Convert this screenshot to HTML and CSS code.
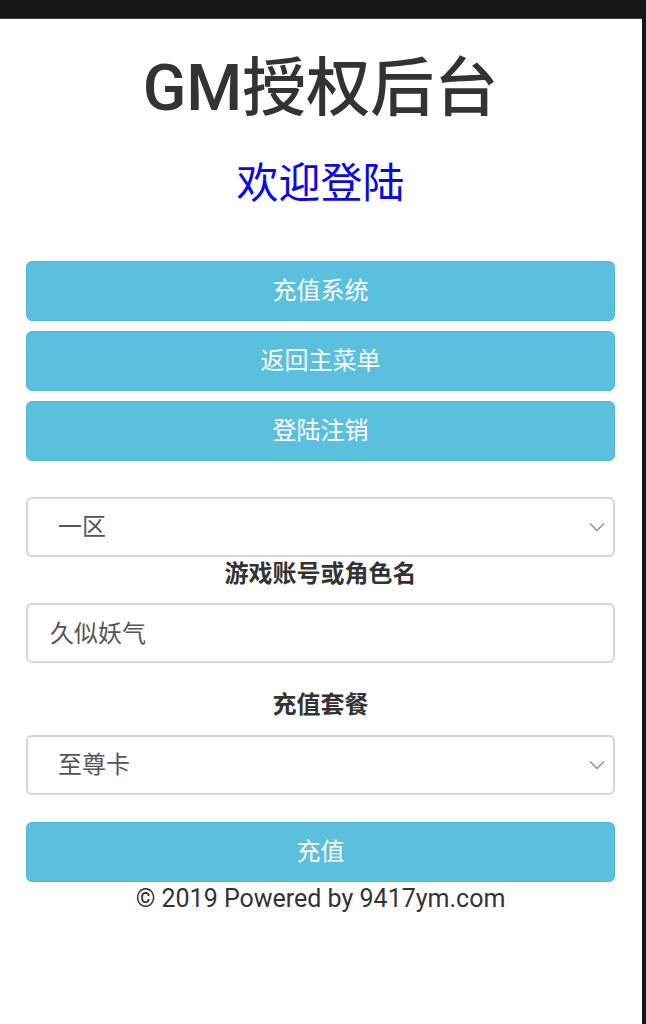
FILE: index.html
```html
<!DOCTYPE html>
<html lang="zh-CN">
<head>
<meta charset="utf-8">
<title>GM授权后台</title>
<link rel="stylesheet" href="styles.css">
</head>
<body>
<div class="statusbar"></div>
<div class="page">
  <h1 class="title">GM授权后台</h1>
  <h2 class="welcome">欢迎登陆</h2>
  <div class="menu">
    <a class="btn">充值系统</a>
    <a class="btn">返回主菜单</a>
    <a class="btn">登陆注销</a>
  </div>
  <form class="form">
    <div class="select">
      <span class="select-text">一区</span>
      <svg class="chev" viewBox="0 0 16 10" width="16" height="10"><path d="M1 1.5 L8 8.5 L15 1.5" fill="none" stroke="#8a8a8a" stroke-width="1.3"/></svg>
    </div>
    <div class="label label-first">游戏账号或角色名</div>
    <div class="input">久似妖气</div>
    <div class="label label-second">充值套餐</div>
    <div class="select">
      <span class="select-text">至尊卡</span>
      <svg class="chev" viewBox="0 0 16 10" width="16" height="10"><path d="M1 1.5 L8 8.5 L15 1.5" fill="none" stroke="#8a8a8a" stroke-width="1.3"/></svg>
    </div>
    <a class="btn btn-submit">充值</a>
  </form>
  <div class="footer">© 2019 Powered by 9417ym.com</div>
</div>
</body>
</html>
```
FILE: styles.css
```css
html, body {
  margin: 0;
  padding: 0;
  background: #161616;
  height: 100%;
}
body {
  display: flex;
  flex-direction: column;
  font-family: Roboto, "Noto Sans CJK SC", sans-serif;
  color: #333;
}
.statusbar {
  height: 18px;
  flex: none;
  background: #161616;
}
.page {
  flex: 1;
  background: #fff;
  margin-right: 4px;
  padding: 0 27px 0 26px;
  display: flex;
  flex-direction: column;
  border-top: 1px solid #444;
}
.title {
  margin: 35px 0 0;
  font-size: 64px;
  line-height: 70px;
  font-weight: 500;
  text-align: center;
  color: #333;
}
.welcome {
  margin: 37px 0 0;
  font-size: 42px;
  line-height: 46px;
  font-weight: 400;
  text-align: center;
  color: #0a0ae6;
}
.menu {
  margin-top: 54px;
  display: flex;
  flex-direction: column;
  gap: 10px;
}
.btn {
  display: flex;
  align-items: center;
  justify-content: center;
  height: 60px;
  padding-bottom: 5px;
  background: #5bc0de;
  border: 1px solid #52b6d4;
  box-sizing: border-box;
  border-radius: 6px;
  color: #fff;
  font-size: 24px;
}
.form {
  margin: 36px 0 0;
  display: flex;
  flex-direction: column;
}
.select, .input {
  height: 60px;
  box-sizing: border-box;
  border: 2px solid #d6d6d6;
  border-radius: 6px;
  display: flex;
  align-items: center;
  font-size: 24px;
  color: #555;
  background: #fff;
}
.select {
  padding: 0 8px 0 30px;
  justify-content: space-between;
}
.select-text {
  padding-bottom: 6px;
}
.input {
  padding: 0 22px 4px;
}
.chev {
  display: block;
}
.label {
  text-align: center;
  font-weight: 700;
  font-size: 24px;
  line-height: 34px;
  color: #333;
}
.label-first {
  margin: 0 0 12px;
}
.label-second {
  margin: 25px 0 13px;
}
.btn-submit {
  margin-top: 27px;
}
.footer {
  margin-top: 2px;
  text-align: center;
  font-size: 25px;
  line-height: 30px;
  color: #333;
}
```
